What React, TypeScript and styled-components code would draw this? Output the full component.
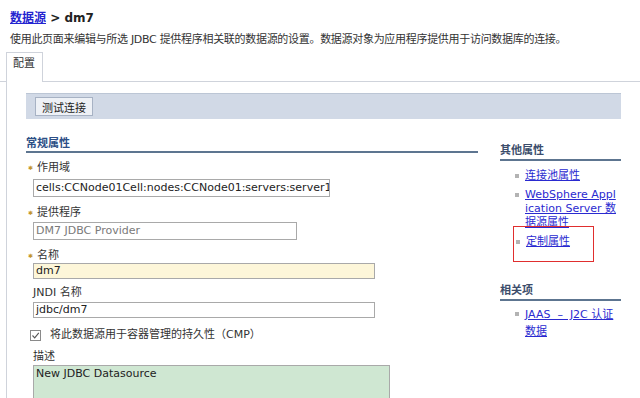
import React from "react";
import styled, { createGlobalStyle } from "styled-components";

const GlobalStyle = createGlobalStyle`
  body {
    margin: 0;
    background: #fff;
    font-family: "DejaVu Sans", "Noto Sans CJK SC", sans-serif;
    font-size: 11px;
    color: #333;
  }
`;

const App = () => {
  return (
    <>
      <GlobalStyle />
      <Page>
        <Header>
          <Breadcrumb>
            <a href="#">数据源</a> &gt; dm7
          </Breadcrumb>
          <Intro>
            使用此页面来编辑与所选 JDBC 提供程序相关联的数据源的设置。数据源对象为应用程序提供用于访问数据库的连接。
          </Intro>
        </Header>
        <TabBar>
          <Tab>配置</Tab>
        </TabBar>
        <Panel>
          <Toolbar>
            <ToolButton>测试连接</ToolButton>
          </Toolbar>
          <Columns>
            <MainColumn>
              <SectionTitle>常规属性</SectionTitle>
              <FieldLabel $required $top={8}>
                作用域
              </FieldLabel>
              <TextBox $width={297} $height={18} $top={4}>
                cells:CCNode01Cell:nodes:CCNode01:servers:server1
              </TextBox>
              <FieldLabel $required $top={9}>
                提供程序
              </FieldLabel>
              <TextBox $width={264} $height={18} $top={2} $muted>
                DM7 JDBC Provider
              </TextBox>
              <FieldLabel $required $top={9}>
                名称
              </FieldLabel>
              <TextBox $width={342} $height={16} $top={0} $bg="#fdf6d9">
                dm7
              </TextBox>
              <FieldLabel $top={7}>JNDI 名称</FieldLabel>
              <TextBox $width={342} $height={16} $top={2}>
                jdbc/dm7
              </TextBox>
              <CheckRow>
                <CheckBox>
                  <svg width="9" height="9" viewBox="0 0 9 9">
                    <path
                      d="M1.5 4.5 L3.7 6.8 L7.8 1.8"
                      fill="none"
                      stroke="#555"
                      strokeWidth="1.1"
                    />
                  </svg>
                </CheckBox>
                将此数据源用于容器管理的持久性（CMP）
              </CheckRow>
              <FieldLabel $top={8}>描述</FieldLabel>
              <TextBox $width={357} $height={50} $top={1} $bg="#cfe7d2">
                New JDBC Datasource
              </TextBox>
            </MainColumn>
            <SideColumn>
              <SideTitle>其他属性</SideTitle>
              <LinkList $top={8}>
                <LinkItem>
                  <Bullet />
                  <LinkText href="#">连接池属性</LinkText>
                </LinkItem>
                <LinkItem>
                  <Bullet />
                  <LinkText href="#">WebSphere Application Server 数据源属性</LinkText>
                </LinkItem>
                <MarkedItem>
                  <Bullet />
                  <LinkText href="#">定制属性</LinkText>
                </MarkedItem>
              </LinkList>
              <SideTitle $top={22}>相关项</SideTitle>
              <LinkList $top={5}>
                <LinkItem $lineHeight={17}>
                  <Bullet $top={6} />
                  <LinkText href="#">JAAS &nbsp;– &nbsp;J2C 认证数据</LinkText>
                </LinkItem>
              </LinkList>
            </SideColumn>
          </Columns>
        </Panel>
      </Page>
    </>
  );
};

export default App;

const Page = styled.div`
  width: 640px;
  height: 398px;
  overflow: hidden;
`;

const Header = styled.div`
  padding: 9px 0 0 10px;
`;

const Breadcrumb = styled.div`
  font-size: 12px;
  font-weight: bold;
  line-height: 18px;
  color: #222;
  a {
    color: #2424d0;
    text-decoration: underline;
  }
`;

const Intro = styled.div`
  margin-top: 4px;
  line-height: 18px;
  color: #333;
  white-space: nowrap;
  letter-spacing: -0.3px;
`;

const TabBar = styled.div`
  display: flex;
  margin-top: 3px;
  padding-left: 6px;
  border-bottom: 1px solid #cfd3db;
`;

const Tab = styled.div`
  height: 30px;
  padding: 4px 7px 0 6px;
  box-sizing: border-box;
  border: 1px solid #cfd3db;
  border-bottom: none;
  margin-bottom: -1px;
  background: #fff;
  line-height: 14px;
  color: #333;
`;

const Panel = styled.div`
  margin-left: 6px;
  border-left: 1px solid #cfd3db;
  padding: 11px 0 0 19px;
  height: 320px;
`;

const Toolbar = styled.div`
  width: 595px;
  height: 26px;
  box-sizing: border-box;
  background: #d1d9e6;
  border-top: 1px solid #bcc6d5;
  padding: 3px 9px;
  display: flex;
  align-items: center;
`;

const ToolButton = styled.button`
  height: 19px;
  padding: 0 6px;
  font-family: inherit;
  font-size: 11px;
  color: #222;
  background: #eef1f6;
  border: 1px solid #a7b2c4;
  border-radius: 0;
`;

const Columns = styled.div`
  display: flex;
  gap: 22px;
`;

const MainColumn = styled.div`
  width: 452px;
  padding-top: 18px;
`;

const SectionTitle = styled.div`
  font-weight: bold;
  line-height: 14px;
  color: #2d4f86;
  padding-bottom: 0;
  border-bottom: 2px solid #5d7590;
`;

const FieldLabel = styled.div<{ $required?: boolean; $top: number }>`
  display: flex;
  align-items: center;
  margin-top: ${(p) => p.$top}px;
  padding-left: ${(p) => (p.$required ? 2 : 7)}px;
  line-height: 14px;
  color: #333;
  &::before {
    content: ${(p) => (p.$required ? '"✱"' : "none")};
    font-size: 6px;
    color: #c3962f;
    width: 9px;
  }
`;

const TextBox = styled.div<{
  $width: number;
  $height: number;
  $top: number;
  $bg?: string;
  $muted?: boolean;
}>`
  width: ${(p) => p.$width}px;
  height: ${(p) => p.$height}px;
  margin-top: ${(p) => p.$top}px;
  margin-left: 7px;
  box-sizing: border-box;
  border: 1px solid #a9a9a9;
  background: ${(p) => p.$bg ?? "#fff"};
  padding: 0 2px;
  line-height: ${(p) => (p.$height > 20 ? 15 : p.$height - 2)}px;
  font-size: 11px;
  color: ${(p) => (p.$muted ? "#7a7a7a" : "#222")};
  white-space: nowrap;
  overflow: hidden;
`;

const CheckRow = styled.div`
  display: flex;
  align-items: center;
  gap: 9px;
  margin-top: 10px;
  padding-left: 4px;
  line-height: 14px;
  color: #333;
`;

const CheckBox = styled.span`
  width: 11px;
  height: 11px;
  box-sizing: border-box;
  border: 1px solid #8a8a8a;
  display: flex;
  align-items: center;
  justify-content: center;
  background: #fff;
`;

const SideColumn = styled.div`
  width: 121px;
  padding-top: 25px;
`;

const SideTitle = styled.div<{ $top?: number }>`
  margin-top: ${(p) => p.$top ?? 0}px;
  font-weight: bold;
  line-height: 14px;
  color: #3b4d6b;
  padding-bottom: 1px;
  border-bottom: 2px solid #5d7590;
`;

const LinkList = styled.ul<{ $top: number }>`
  list-style: none;
  margin: ${(p) => p.$top}px 0 0;
  padding: 0;
  display: flex;
  flex-direction: column;
  gap: 5px;
`;

const LinkItem = styled.li<{ $lineHeight?: number }>`
  display: flex;
  align-items: flex-start;
  line-height: ${(p) => p.$lineHeight ?? 14}px;
  margin-left: 14px;
`;

const MarkedItem = styled.li`
  display: flex;
  align-items: flex-start;
  line-height: 14px;
  margin: -9px 0 0 13px;
  width: 81px;
  height: 36px;
  box-sizing: border-box;
  padding: 8px 0 0 1px;
  border: 1px solid #e02e2e;
`;

const Bullet = styled.span<{ $top?: number }>`
  flex: none;
  width: 4px;
  height: 4px;
  margin: ${(p) => p.$top ?? 5}px 6px 0 1px;
  background: #b3b3b3;
`;

const LinkText = styled.a`
  width: 92px;
  color: #2a2ad0;
  text-decoration: underline;
  word-break: break-all;
`;
